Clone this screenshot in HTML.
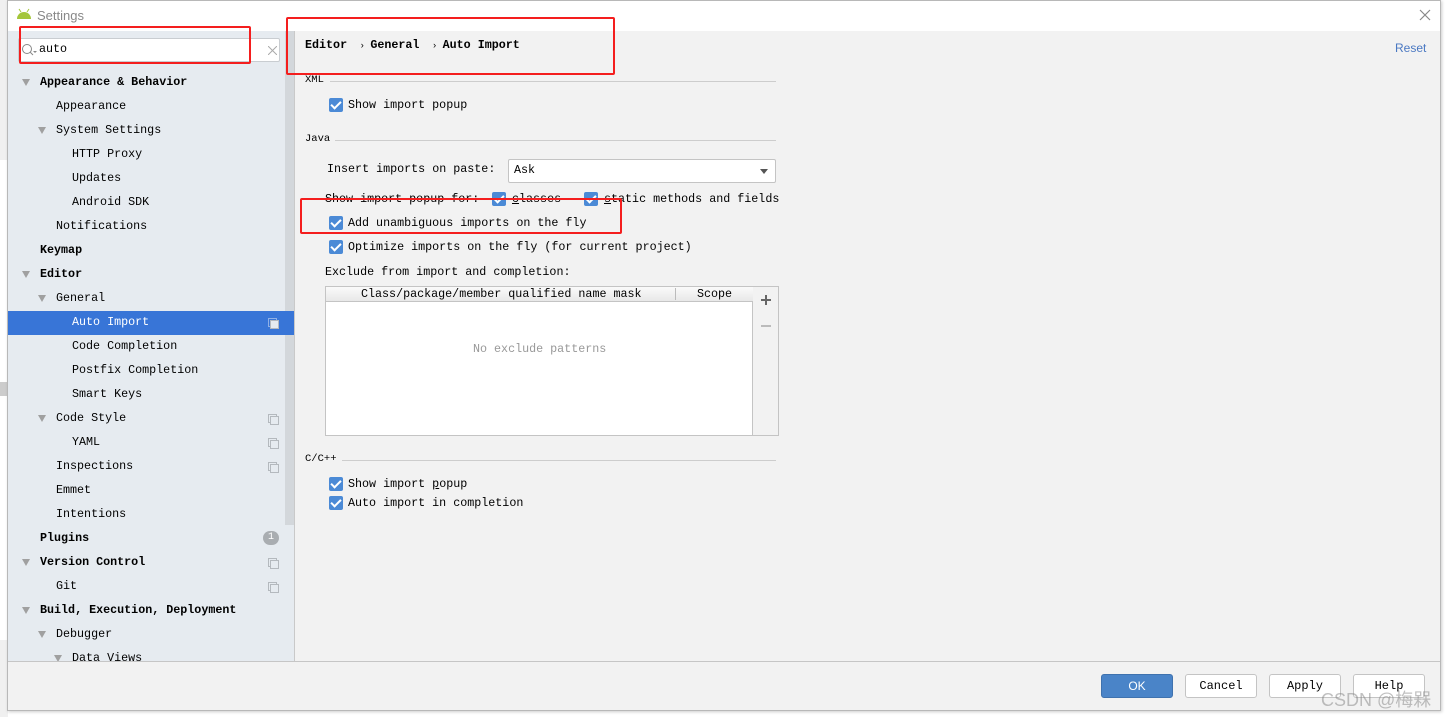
<!DOCTYPE html>
<html><head><meta charset="utf-8"><style>
*{margin:0;padding:0;box-sizing:border-box}
body{width:1448px;height:717px;position:relative;overflow:hidden;background:#fff;font-family:"Liberation Mono","DejaVu Sans Mono",monospace;font-size:11.7px;color:#000}
.a{position:absolute;white-space:nowrap}
.t{position:absolute;white-space:nowrap;line-height:14px;margin-top:1px}
.b{font-weight:bold}
.tri{position:absolute;width:0;height:0;border-left:4.5px solid transparent;border-right:4.5px solid transparent;border-top:7px solid #a0a0a0;margin-top:1px}
.cb{position:absolute;width:14px;height:14px;background:#4b8ad6;border-radius:2px}
.cb:after{content:"";position:absolute;left:4px;top:1px;width:4px;height:8px;border:solid #fff;border-width:0 2px 2px 0;transform:rotate(45deg)}
.red{position:absolute;border:2.5px solid #f41e1e;border-radius:2px}
.ic{position:absolute;width:9px;height:9px;border:1px solid #b4b9be}
.ic:after{content:"";position:absolute;left:1px;top:1px;width:7px;height:7px;border:1px solid #b4b9be;background:#e6ebf0}
.btn{position:absolute;top:674px;height:24px;border:1px solid #c4c4c4;border-radius:3px;background:#fff;text-align:center;line-height:22px;font-size:12px}
.sep{position:absolute;height:1px;background:#cdcdcd}
</style></head><body>
<div class="a" style="left:0;top:0;width:8px;height:717px;background:#f0f0f0"></div>
<div class="a" style="left:0;top:160px;width:8px;height:480px;background:#fff"></div>
<div class="a" style="left:0;top:382px;width:8px;height:14px;background:#ccc"></div>
<div class="a" style="left:1440px;top:0;width:8px;height:717px;background:#fff"></div>
<div class="a" style="left:7px;top:0;width:1434px;height:711px;border:1px solid #b8b8b8;background:#f2f2f2;box-shadow:1px 1px 3px rgba(0,0,0,.2)"></div>
<div class="a" style="left:8px;top:1px;width:1432px;height:30px;background:#fff"></div>
<svg class="a" style="left:15px;top:8px" width="18" height="12"><path d="M2 11 A7 7 0 0 1 16 11Z" fill="#a4c639"/><line x1="4" y1="1" x2="6" y2="4" stroke="#a4c639"/><line x1="14" y1="1" x2="12" y2="4" stroke="#a4c639"/></svg>
<div class="a" style="left:37px;top:8px;font-family:'Liberation Sans',sans-serif;font-size:13px;color:#888">Settings</div>
<svg class="a" style="left:1419px;top:9px" width="12" height="12"><path d="M1 1L11 11M11 1L1 11" stroke="#888" stroke-width="1.2"/></svg>
<div class="a" style="left:8px;top:31px;width:276px;height:631px;background:#e6ebf0"></div>
<div class="a" style="left:284px;top:31px;width:11px;height:631px;background:#e6ebf0;border-right:1px solid #c9c9c9"></div>
<div class="a" style="left:285px;top:31px;width:9px;height:494px;background:#d3d7db"></div>
<div class="a" style="left:18px;top:38px;width:262px;height:24px;background:#fff;border:1px solid #c9cdd1;border-radius:2px"></div>
<svg class="a" style="left:21px;top:43px" width="16" height="14"><circle cx="6" cy="6" r="4.5" fill="none" stroke="#888"/><line x1="9" y1="9" x2="12" y2="12" stroke="#888"/><path d="M12 8h4l-2 2z" fill="#888"/></svg>
<div class="t" style="left:39px;top:41px">auto</div>
<svg class="a" style="left:268px;top:46px" width="9" height="9"><path d="M0 0L9 9M9 0L0 9" stroke="#aaa"/></svg>
<div class="a" style="left:8px;top:311px;width:286px;height:24px;background:#3875d7"></div>

<div class="tri" style="left:22px;top:78px"></div><div class="t b" style="left:40px;top:74px">Appearance &amp; Behavior</div>
<div class="t" style="left:56px;top:98px">Appearance</div>
<div class="tri" style="left:38px;top:126px"></div><div class="t" style="left:56px;top:122px">System Settings</div>
<div class="t" style="left:72px;top:146px">HTTP Proxy</div>
<div class="t" style="left:72px;top:170px">Updates</div>
<div class="t" style="left:72px;top:194px">Android SDK</div>
<div class="t" style="left:56px;top:218px">Notifications</div>
<div class="t b" style="left:40px;top:242px">Keymap</div>
<div class="tri" style="left:22px;top:270px"></div><div class="t b" style="left:40px;top:266px">Editor</div>
<div class="tri" style="left:38px;top:294px"></div><div class="t" style="left:56px;top:290px">General</div>
<div class="t" style="left:72px;top:314px;color:#fff">Auto Import</div>
<div class="ic" style="left:268px;top:318px;border-color:#8fb0e6"></div>
<div class="t" style="left:72px;top:338px">Code Completion</div>
<div class="t" style="left:72px;top:362px">Postfix Completion</div>
<div class="t" style="left:72px;top:386px">Smart Keys</div>
<div class="tri" style="left:38px;top:414px"></div><div class="t" style="left:56px;top:410px">Code Style</div><div class="ic" style="left:268px;top:414px"></div>
<div class="t" style="left:72px;top:434px">YAML</div><div class="ic" style="left:268px;top:438px"></div>
<div class="t" style="left:56px;top:458px">Inspections</div><div class="ic" style="left:268px;top:462px"></div>
<div class="t" style="left:56px;top:482px">Emmet</div>
<div class="t" style="left:56px;top:506px">Intentions</div>
<div class="t b" style="left:40px;top:530px">Plugins</div>
<div class="a" style="left:263px;top:531px;width:16px;height:14px;border-radius:7px;background:#a9adb1;color:#fff;font-size:10px;text-align:center;line-height:14px">1</div>
<div class="tri" style="left:22px;top:558px"></div><div class="t b" style="left:40px;top:554px">Version Control</div><div class="ic" style="left:268px;top:558px"></div>
<div class="t" style="left:56px;top:578px">Git</div><div class="ic" style="left:268px;top:582px"></div>
<div class="tri" style="left:22px;top:606px"></div><div class="t b" style="left:40px;top:602px">Build, Execution, Deployment</div>
<div class="tri" style="left:38px;top:630px"></div><div class="t" style="left:56px;top:626px">Debugger</div>
<div class="tri" style="left:54px;top:654px"></div><div class="t" style="left:72px;top:650px">Data Views</div>

<div class="t b" style="left:305px;top:37px">Editor <span style="font-weight:normal;font-size:9px">&nbsp;›&nbsp;</span>General <span style="font-weight:normal;font-size:9px">&nbsp;›&nbsp;</span>Auto Import</div>
<div class="t" style="left:1395px;top:40px;color:#4a78c2;font-family:'Liberation Sans',sans-serif;font-size:12px">Reset</div>
<div class="t" style="left:305px;top:72px;font-size:10.5px">XML</div><div class="sep" style="left:330px;top:81px;width:446px"></div>
<div class="cb" style="left:329px;top:98px"></div><div class="t" style="left:348px;top:97px">Show import popup</div>
<div class="t" style="left:305px;top:131px;font-size:10.5px">Java</div><div class="sep" style="left:335px;top:140px;width:441px"></div>
<div class="t" style="left:327px;top:161px">Insert imports on paste:</div>
<div class="a" style="left:508px;top:159px;width:268px;height:24px;background:#fff;border:1px solid #c4c4c4;border-radius:2px"></div>
<div class="t" style="left:514px;top:162px">Ask</div>
<div class="a" style="left:760px;top:169px;border-left:4px solid transparent;border-right:4px solid transparent;border-top:5px solid #555"></div>
<div class="t" style="left:325px;top:191px">Show import popup for:</div>
<div class="cb" style="left:492px;top:192px"></div><div class="t" style="left:512px;top:191px"><u>c</u>lasses</div>
<div class="cb" style="left:584px;top:192px"></div><div class="t" style="left:604px;top:191px"><u>s</u>tatic methods and fields</div>
<div class="cb" style="left:329px;top:216px"></div><div class="t" style="left:348px;top:215px">Add unambiguous imports on the fly</div>
<div class="cb" style="left:329px;top:240px"></div><div class="t" style="left:348px;top:239px">Optimize imports on the fly (for current project)</div>
<div class="t" style="left:325px;top:264px">Exclude from import and completion:</div>
<div class="a" style="left:325px;top:286px;width:454px;height:150px;border:1px solid #c4c4c4;background:#f2f2f2"></div>
<div class="a" style="left:326px;top:287px;width:427px;height:148px;background:#fff;border-right:1px solid #c4c4c4"></div>
<div class="a" style="left:326px;top:287px;width:427px;height:15px;background:linear-gradient(#fafafa,#e8e8e8);border-bottom:1px solid #c4c4c4"></div>
<div class="a" style="left:675px;top:288px;width:1px;height:12px;background:#bbb"></div>
<div class="t" style="left:361px;top:286px">Class/package/member qualified name mask</div>
<div class="t" style="left:697px;top:286px">Scope</div>
<div class="t" style="left:473px;top:341px;color:#999">No exclude patterns</div>
<div class="a" style="left:761px;top:299px;width:10px;height:2px;background:#666"></div><div class="a" style="left:765px;top:295px;width:2px;height:10px;background:#666"></div>
<div class="a" style="left:761px;top:325px;width:10px;height:2px;background:#bbb"></div>
<div class="t" style="left:305px;top:451px;font-size:10.5px">C/C++</div><div class="sep" style="left:342px;top:460px;width:434px"></div>
<div class="cb" style="left:329px;top:477px"></div><div class="t" style="left:348px;top:476px">Show import <u>p</u>opup</div>
<div class="cb" style="left:329px;top:496px"></div><div class="t" style="left:348px;top:495px">Auto import in completion</div>

<div class="a" style="left:8px;top:661px;width:1432px;height:1px;background:#c6c6c6"></div>
<div class="btn" style="left:1101px;width:72px;background:#4a84c8;border-color:#3f72ae;color:#fff;font-family:'Liberation Sans',sans-serif">OK</div>
<div class="btn" style="left:1185px;width:72px">Cancel</div>
<div class="btn" style="left:1269px;width:72px">Apply</div>
<div class="btn" style="left:1353px;width:72px">Help</div>
<div class="a" style="left:1321px;top:686px;font-family:'Liberation Sans','Noto Sans CJK SC',sans-serif;font-size:18px;color:rgba(130,130,130,.5)">CSDN @梅槑</div>

<div class="red" style="left:19px;top:26px;width:232px;height:38px"></div>
<div class="red" style="left:286px;top:17px;width:329px;height:58px"></div>
<div class="red" style="left:300px;top:198px;width:322px;height:36px"></div>
</body></html>
